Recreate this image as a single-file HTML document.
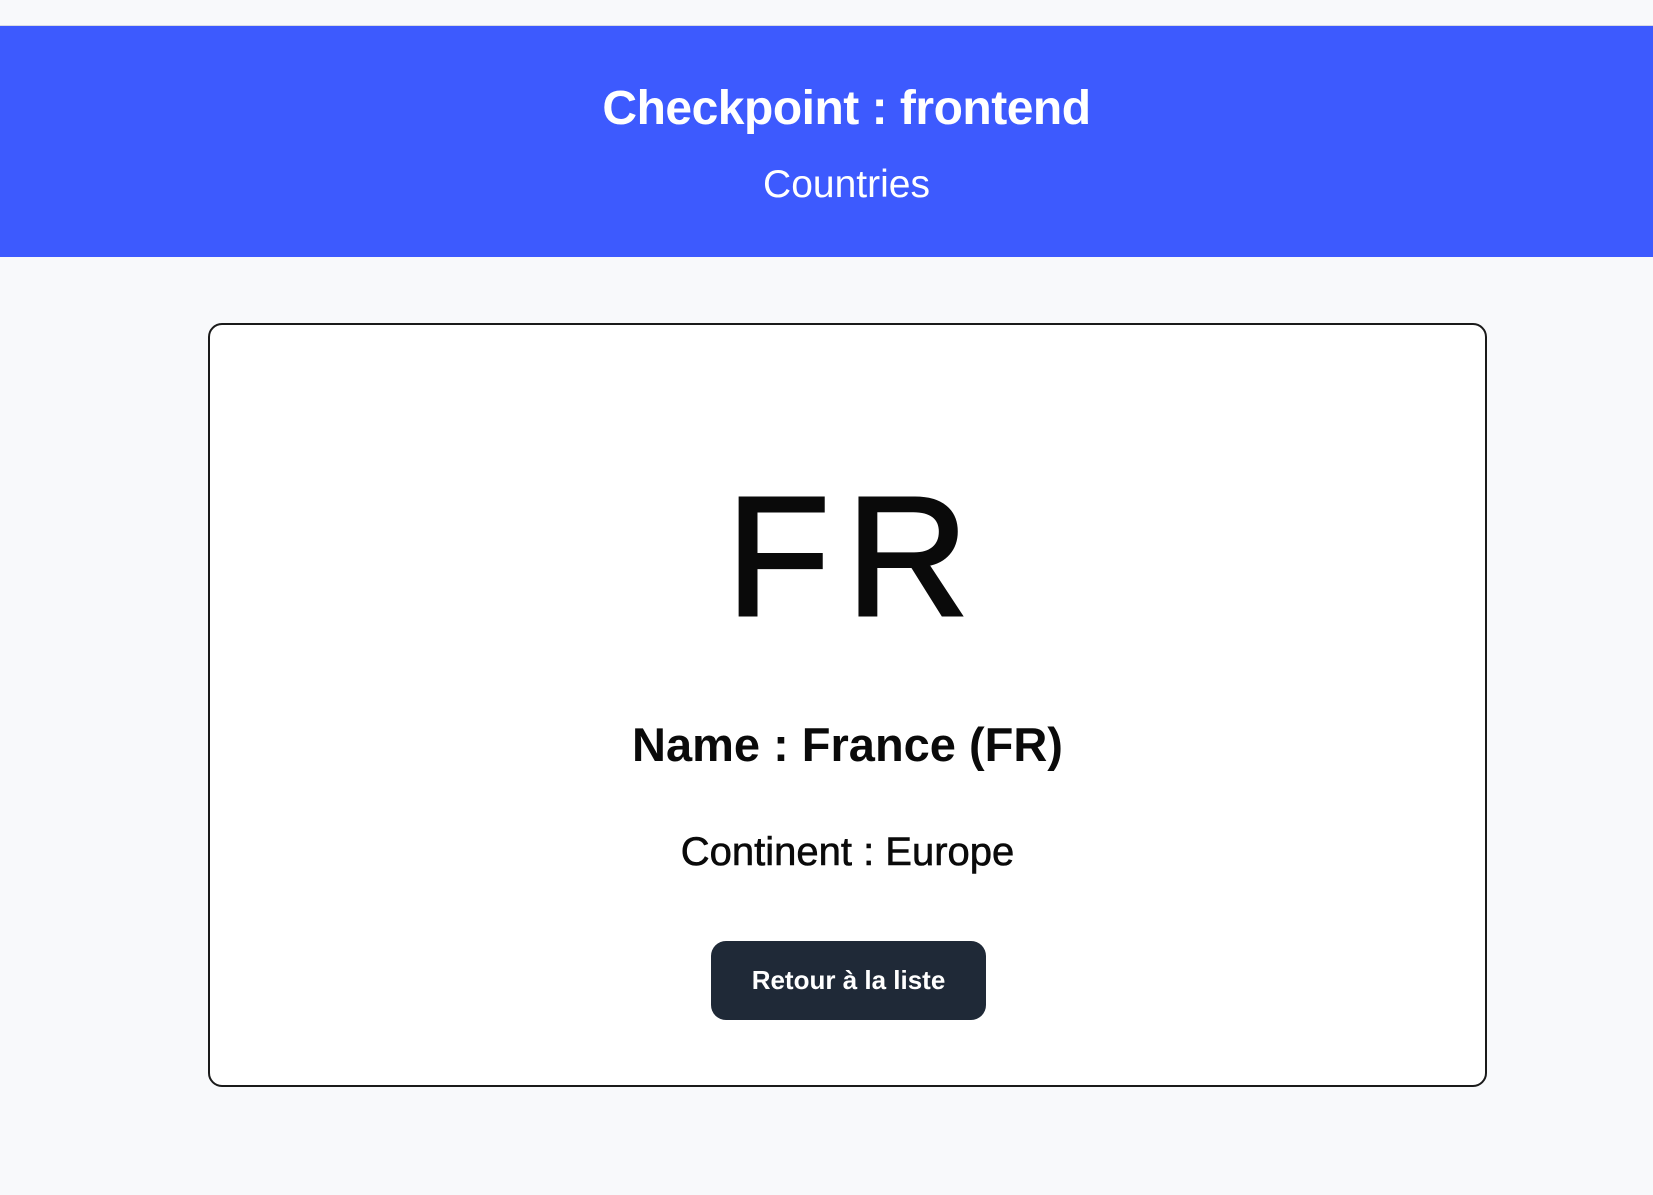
<!DOCTYPE html>
<html><head><meta charset="utf-8"><style>
html,body{margin:0;padding:0;width:1653px;height:1195px;background:#f8f9fb;font-family:"Liberation Sans",sans-serif;overflow:hidden;position:relative}
.top{position:absolute;left:0;top:0;width:1653px;height:25px;background:#f8f9fb;border-bottom:1px solid #d8dbe3}
.hdr{position:absolute;left:0;top:26px;width:1653px;height:231px;background:#3d5afe;color:#fff;text-align:center}
.t1{position:absolute;left:40px;right:0;top:56px;font-size:48px;font-weight:bold;line-height:54px;letter-spacing:-0.5px}
.t2{position:absolute;left:40px;right:0;top:137px;font-size:39px;line-height:44px}
.card{position:absolute;left:208px;top:323px;width:1275px;height:760px;background:#fff;border:2px solid #1a1a1a;border-radius:14px;text-align:center;color:#0a0a0a}
.fr{position:absolute;left:0;right:0;top:137px;font-size:170px;line-height:190px;letter-spacing:16px;padding-left:16px;-webkit-text-stroke:3px #0a0a0a}
.nm{position:absolute;left:0;right:0;top:393px;font-size:47px;font-weight:bold;line-height:54px}
.ct{position:absolute;left:0;right:0;top:504px;font-size:40px;line-height:46px;-webkit-text-stroke:0.6px #0a0a0a}
.btn{position:absolute;left:501px;top:616px;width:275px;height:79px;background:#1f2937;border-radius:15px;color:#fff;font-size:26px;font-weight:bold;line-height:79px}
</style></head><body>
<div class="top"></div>
<div class="hdr"><div class="t1">Checkpoint : frontend</div><div class="t2">Countries</div></div>
<div class="card">
<div class="fr">FR</div>
<div class="nm">Name : France (FR)</div>
<div class="ct">Continent : Europe</div>
<div class="btn">Retour à la liste</div>
</div>
</body></html>
